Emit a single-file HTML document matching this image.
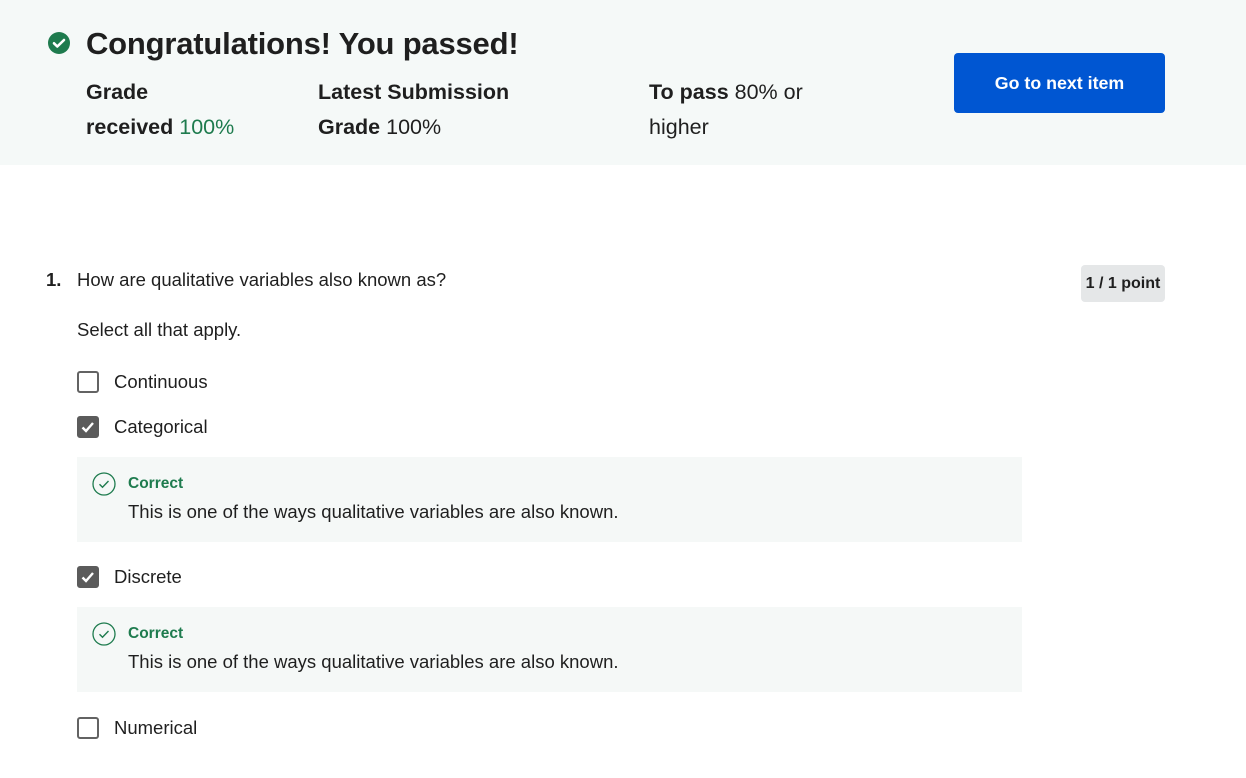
<!DOCTYPE html>
<html><head><style>
*{margin:0;padding:0;box-sizing:border-box}
body{width:1246px;height:778px;background:#fff;font-family:"Liberation Sans",sans-serif;color:#1f1f1f;position:relative;overflow:hidden}
.a{position:absolute;white-space:nowrap}
.hdr{position:absolute;left:0;top:0;width:1246px;height:165px;background:#f5f9f8}
.big{font-size:21.5px;line-height:35px}
.b{font-weight:bold}
.cb{position:absolute;left:77px;width:22px;height:22px;border:2px solid #636363;border-radius:3px;background:#fff}
.cb.on{background:#5b5b5b;border-color:#5b5b5b}
.t{font-size:18.5px;line-height:22px}
.opt{left:114px}
.fb{position:absolute;left:77px;width:945px;height:85px;background:#f5f8f7}
</style></head><body>
<div class="hdr"></div>
<svg class="a" style="left:47px;top:31px" width="24" height="24" viewBox="0 0 24 24"><circle cx="12" cy="12" r="11" fill="#1e7b4e"/><path d="M7 12.3l3.3 3.2L17 9" stroke="#fff" stroke-width="2.6" fill="none" stroke-linecap="round" stroke-linejoin="round"/></svg>
<div class="a" style="left:86px;top:23px;font-size:31px;font-weight:bold;line-height:42px;letter-spacing:-0.2px">Congratulations! You passed!</div>
<div class="a big" style="left:86px;top:75px"><span class="b">Grade</span></div>
<div class="a big" style="left:86px;top:110px"><span class="b">received</span> <span style="color:#1e7b4e">100%</span></div>
<div class="a big" style="left:318px;top:75px"><span class="b">Latest Submission</span></div>
<div class="a big" style="left:318px;top:110px"><span class="b">Grade</span> 100%</div>
<div class="a big" style="left:649px;top:75px"><span class="b">To pass</span> 80% or</div>
<div class="a big" style="left:649px;top:110px">higher</div>
<div class="a" style="left:954px;top:53px;width:211px;height:60px;background:#0056d2;border-radius:4px;color:#fff;font-weight:bold;font-size:17.8px;line-height:60px;text-align:center">Go to next item</div>

<div class="a b t" style="left:46px;top:269px">1.</div>
<div class="a t" style="left:77px;top:269px">How are qualitative variables also known as?</div>
<div class="a b" style="left:1081px;top:265px;width:84px;height:37px;background:#e5e7e8;border-radius:4px;font-size:16px;line-height:37px;text-align:center">1 / 1 point</div>
<div class="a t" style="left:77px;top:319px">Select all that apply.</div>

<div class="cb" style="top:371px"></div><div class="a t opt" style="top:371px">Continuous</div>
<div class="cb on" style="top:416px"><svg width="18" height="18" viewBox="0 0 18 18"><path d="M3.5 9.5l3.5 3.5 7-8" stroke="#fff" stroke-width="2.4" fill="none"/></svg></div><div class="a t opt" style="top:416px">Categorical</div>
<div class="fb" style="top:457px"></div>
<svg class="a" style="left:92px;top:472px" width="24" height="24" viewBox="0 0 24 24"><circle cx="12" cy="12" r="11" fill="none" stroke="#1e7b4e" stroke-width="1.3"/><path d="M7.5 12.2l3 3 6-6.2" stroke="#1e7b4e" stroke-width="1.4" fill="none"/></svg>
<div class="a b" style="left:128px;top:474px;font-size:15.5px;line-height:20px;color:#1e7b4e">Correct</div>
<div class="a t" style="left:128px;top:501px">This is one of the ways qualitative variables are also known.</div>

<div class="cb on" style="top:566px"><svg width="18" height="18" viewBox="0 0 18 18"><path d="M3.5 9.5l3.5 3.5 7-8" stroke="#fff" stroke-width="2.4" fill="none"/></svg></div><div class="a t opt" style="top:566px">Discrete</div>
<div class="fb" style="top:607px"></div>
<svg class="a" style="left:92px;top:622px" width="24" height="24" viewBox="0 0 24 24"><circle cx="12" cy="12" r="11" fill="none" stroke="#1e7b4e" stroke-width="1.3"/><path d="M7.5 12.2l3 3 6-6.2" stroke="#1e7b4e" stroke-width="1.4" fill="none"/></svg>
<div class="a b" style="left:128px;top:624px;font-size:15.5px;line-height:20px;color:#1e7b4e">Correct</div>
<div class="a t" style="left:128px;top:651px">This is one of the ways qualitative variables are also known.</div>

<div class="cb" style="top:717px"></div><div class="a t opt" style="top:717px">Numerical</div>
</body></html>
